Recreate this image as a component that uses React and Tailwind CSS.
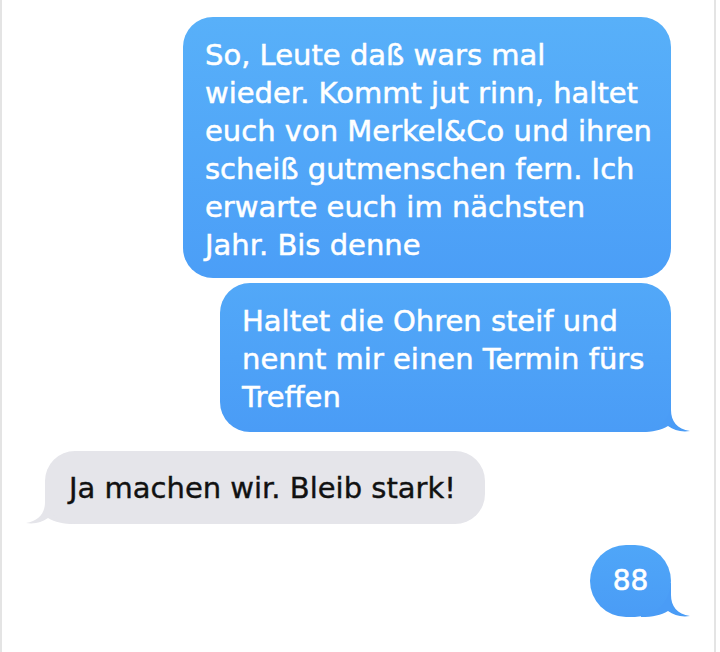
const BlueTail = () => (
  <svg
    className="absolute bottom-0 right-[-20px]"
    width="50"
    height="34"
    viewBox="0 0 50 34"
  >
    <path
      d="M0 0 H30 V12 C30 23 36 31 49 33 C40 34.5 33 32 27 28 C20 32 12 34 0 34 Z"
      fill="#4a9cf6"
    />
  </svg>
)

const GrayTail = () => (
  <svg
    className="absolute bottom-0 left-[-20px]"
    width="50"
    height="34"
    viewBox="0 0 50 34"
  >
    <path
      d="M50 0 H20 V12 C20 23 14 31 1 33 C10 34.5 17 32 23 28 C30 32 38 34 50 34 Z"
      fill="#e5e5ea"
    />
  </svg>
)

const font = { fontFamily: '"DejaVu Sans", Verdana, sans-serif' }

export default function App() {
  return (
    <div className="w-[720px] h-[652px] bg-white overflow-hidden" style={font}>
      <div className="w-[716px] h-[652px] border-x-2 border-[#e4e4e4] flex flex-col pt-[17px] px-[43px]">
        {/* outgoing 1 */}
        <div className="self-end w-[488px] relative">
          <div className="relative z-10 rounded-[30px] bg-gradient-to-b from-[#58b0f9] to-[#4b9ef7] text-white text-[29px] leading-[38px] pl-[22px] pr-[10px] pt-[19px] pb-[14px] whitespace-nowrap [-webkit-text-stroke:0.5px_#fff]">
            So, Leute daß wars mal<br />
            wieder. Kommt jut rinn, haltet<br />
            euch von Merkel&amp;Co und ihren<br />
            scheiß gutmenschen fern. Ich<br />
            erwarte euch im nächsten<br />
            Jahr. Bis denne
          </div>
        </div>

        {/* outgoing 2 */}
        <div className="self-end w-[451px] relative mt-[5px]">
          <div className="relative z-10 rounded-[30px] bg-gradient-to-b from-[#52a8f8] to-[#4a9cf6] text-white text-[29px] leading-[38px] pl-[22px] pr-[10px] pt-[19px] pb-[16px] whitespace-nowrap [-webkit-text-stroke:0.5px_#fff]">
            Haltet die Ohren steif und<br />
            nennt mir einen Termin fürs<br />
            Treffen
          </div>
          <BlueTail />
        </div>

        {/* incoming */}
        <div className="self-start w-[440px] relative mt-[19px]">
          <div className="relative z-10 rounded-[30px] bg-[#e5e5ea] text-[#111] text-[29px] leading-[38px] pl-[24px] pr-[10px] pt-[18px] pb-[17px] whitespace-nowrap [-webkit-text-stroke:0.4px_#111]">
            Ja machen wir. Bleib stark!
          </div>
          <GrayTail />
        </div>

        {/* outgoing 88 */}
        <div className="self-end w-[81px] relative mt-[21px]">
          <div className="relative z-10 h-[72px] rounded-full bg-gradient-to-b from-[#4fa6f8] to-[#4a9cf6] text-white text-[28px] flex items-center justify-center [-webkit-text-stroke:0.6px_#fff]">
            88
          </div>
          <BlueTail />
        </div>
      </div>
    </div>
  )
}
